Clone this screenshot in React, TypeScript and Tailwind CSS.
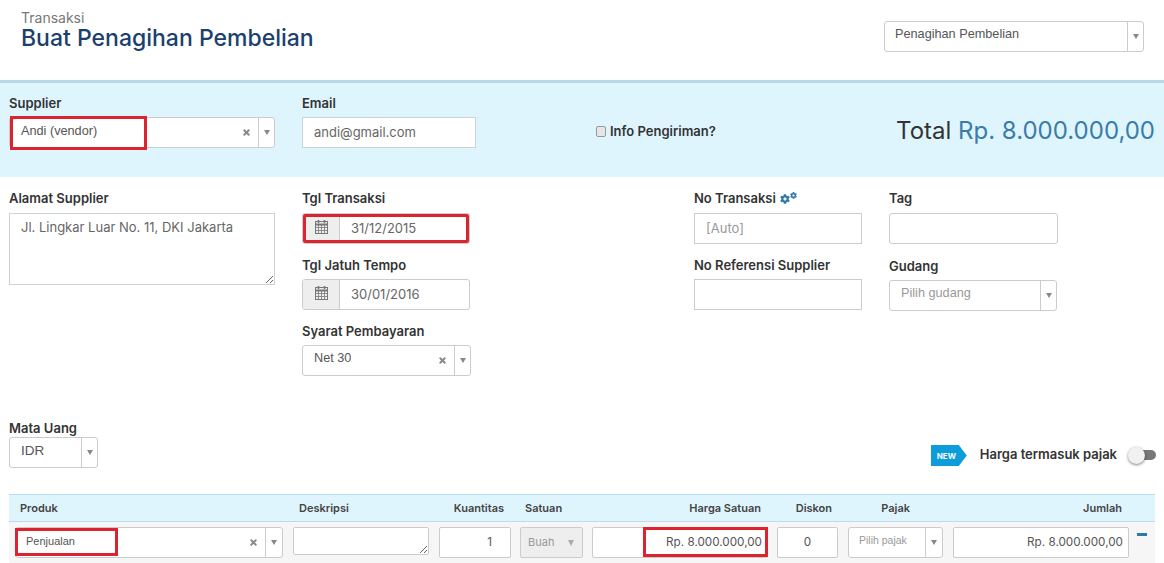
import React from "react"
import { X } from "lucide-react"
import { FaCog } from "react-icons/fa"

const LABEL = "block text-[13px] font-semibold leading-[16px] text-[#333]"
const BOX = "border border-[#ccd3d8] bg-white text-[13px] text-[#666]"

const Caret = ({ className = "" }: { className?: string }) => (
    <span className={`ml-auto flex h-full shrink-0 items-center justify-center border-l border-[#ccc] ${className}`}>
        <span className="h-0 w-0 border-x-[3px] border-t-[5px] border-x-transparent border-t-[#888]" />
    </span>
)

const Clear = () => <X className="mr-[7px] h-[9px] w-[9px] shrink-0 text-[#888]" strokeWidth={5} />

const CalendarIcon = () => (
    <svg viewBox="0 0 13 14" className="-mt-[3px] h-[14px] w-[13px] text-[#777]" fill="none" stroke="currentColor">
        <path d="M3.5 0v3M9.5 0v3" strokeWidth="1.6" />
        <rect x="0.5" y="1.5" width="12" height="12" />
        <path d="M0 4.5h13" strokeWidth="2" />
        <path d="M0.5 7.5h12M0.5 10.5h12M3.5 5v8M6.5 5v8M9.5 5v8" strokeWidth="0.8" />
    </svg>
)

const SelectBox = ({ value, width, clear, muted, caret = "w-[16px]", textClass = "pl-[11px] text-[12.7px] -mt-[4px]" }: {
    value?: string
    width: string
    clear?: boolean
    muted?: boolean
    caret?: string
    textClass?: string
}) => (
    <div className={`flex h-[31px] items-center rounded-[3px] border border-[#ccc] bg-white font-['Liberation_Sans',sans-serif] ${muted ? "text-[#999]" : "text-[#555]"} ${width}`}>
        <span className={`truncate ${textClass}`}>{value}</span>
        {clear && <span className="ml-auto flex"><Clear /></span>}
        <Caret className={clear ? `!ml-0 ${caret}` : caret} />
    </div>
)

const DateBox = ({ value, marked }: { value: string; marked?: boolean }) => (
    <div className="relative flex h-[31px] w-[168px] overflow-hidden rounded-[3px] border border-[#ccc] bg-white text-[13px] text-[#666]">
        <span className="flex w-[37px] shrink-0 items-center justify-center border-r border-[#ccc] bg-[#eee]">
            <CalendarIcon />
        </span>
        <span className="flex items-center pl-[11px]">{value}</span>
        {marked && <span className="absolute inset-0 border-[3px] border-[#dc2430]" />}
    </div>
)

export default function App() {
    return (
        <div className="h-[563px] w-[1164px] overflow-hidden bg-white font-['Inter',sans-serif]">
            {/* Judul */}
            <div className="flex h-[80px] items-start justify-between pl-[21px] pr-[20px]">
                <div className="pt-[10px]">
                    <div className="text-[14px] leading-[16px] text-[#777]">Transaksi</div>
                    <div className="-mt-[1px] text-[23px] font-medium leading-[26px] text-[#1b3f6e]">Buat Penagihan Pembelian</div>
                </div>
                <div className="pt-[21px]">
                    <SelectBox value="Penagihan Pembelian" width="w-[260px]" textClass="pl-[10px] text-[12.7px] -mt-[3px]" />
                </div>
            </div>

            {/* Supplier */}
            <div className="flex h-[97px] border-t-[3px] border-[#b9d8e6] bg-[#dff5fe] pl-[9px] pr-[9px] pt-[12px]">
                <div className="w-[266px]">
                    <label className={LABEL}>Supplier</label>
                    <div className="relative mt-[6px]">
                        <SelectBox value="Andi (vendor)" width="w-[266px]" clear textClass="pl-[11px] text-[12.7px] -mt-[1px]" />
                        <span className="absolute -top-[1px] left-[1px] h-[34px] w-[137px] border-[3px] border-[#dc2430]" />
                    </div>
                </div>
                <div className="ml-[27px] w-[174px]">
                    <label className={LABEL}>Email</label>
                    <div className={`mt-[6px] flex h-[31px] items-center pl-[11px] ${BOX}`}>andi@gmail.com</div>
                </div>
                <label className="ml-[120px] mt-[29px] flex h-[16px] items-center text-[13px] font-semibold text-[#333]">
                    <input type="checkbox" className="-mt-[2px] mr-[4px] h-[11px] w-[10px] appearance-none rounded-[2px] border border-[#999] bg-[#e6e6e6]" />
                    Info Pengiriman?
                </label>
                <div className="ml-auto mt-[21px] text-[24px] leading-[30px] text-[#333]">
                    Total <span className="text-[#3a7ca8]">Rp. 8.000.000,00</span>
                </div>
            </div>

            {/* Detail */}
            <div className="flex h-[243px] pl-[9px] pt-[13px]">
                <div className="w-[266px]">
                    <label className={LABEL}>Alamat Supplier</label>
                    <textarea
                        readOnly
                        value="Jl. Lingkar Luar No. 11, DKI Jakarta"
                        className={`mt-[7px] block h-[72px] w-[266px] px-[11px] py-[4px] ${BOX}`}
                    />
                </div>
                <div className="ml-[27px] w-[171px]">
                    <label className={LABEL}>Tgl Transaksi</label>
                    <div className="mt-[7px]"><DateBox value="31/12/2015" marked /></div>
                    <label className={`${LABEL} mt-[13px]`}>Tgl Jatuh Tempo</label>
                    <div className="mt-[6px]"><DateBox value="30/01/2016" /></div>
                    <label className={`${LABEL} mt-[13px]`}>Syarat Pembayaran</label>
                    <div className="mt-[6px]"><SelectBox value="Net 30" width="w-[169px]" clear /></div>
                </div>
                <div className="ml-[221px] w-[168px]">
                    <label className={`${LABEL} flex items-center`}>
                        No Transaksi
                        <FaCog className="ml-[4px] mt-[2px] h-[10px] w-[10px] text-[#2f78a8]" />
                        <FaCog className="-mt-[5px] h-[7px] w-[7px] text-[#2f78a8]" />
                    </label>
                    <div className="mt-[7px] flex h-[31px] items-center border border-[#ccc] pl-[11px] text-[13px] text-[#999]">[Auto]</div>
                    <label className={`${LABEL} mt-[13px]`}>No Referensi Supplier</label>
                    <div className="mt-[6px] h-[31px] border border-[#ccc]" />
                </div>
                <div className="ml-[27px] w-[169px]">
                    <label className={LABEL}>Tag</label>
                    <div className="mt-[7px] h-[31px] rounded-[3px] border border-[#ccc]" />
                    <label className={`${LABEL} mt-[14px]`}>Gudang</label>
                    <div className="mt-[6px]"><SelectBox value="Pilih gudang" width="w-[168px]" muted textClass="pl-[11px] text-[12.7px] -mt-[3px]" /></div>
                </div>
            </div>

            {/* Mata uang */}
            <div className="flex h-[74px] items-start pl-[9px] pr-[8px]">
                <div>
                    <label className={LABEL}>Mata Uang</label>
                    <div className="mt-[1px]"><SelectBox value="IDR" width="w-[89px]" textClass="pl-[11px] text-[13.5px] -mt-[3px]" /></div>
                </div>
                <div className="ml-auto mt-[23px] flex items-center">
                    <span className="mt-[2px] flex h-[21px] w-[36px] items-center bg-[#0d9ddb] pl-[6px] text-[8px] font-bold text-white [clip-path:polygon(0_0,78%_0,100%_50%,78%_100%,0_100%)]">NEW</span>
                    <span className="ml-[13px] text-[13px] font-semibold text-[#333]">Harga termasuk pajak</span>
                    <span className="relative ml-[12px] block h-[10px] w-[27px] rounded-full bg-[#777]">
                        <span className="absolute -left-[1px] -top-[3px] h-[17px] w-[17px] rounded-full bg-[#f1f1f1] shadow-[0_1px_3px_rgba(0,0,0,0.5)]" />
                    </span>
                </div>
            </div>

            {/* Tabel produk */}
            <div className="mx-[9px] w-[1146px]">
                <div className="flex h-[28px] items-center border-y border-[#bcdcea] bg-[#dff5fe] text-[11px] font-semibold text-[#444]">
                    <span className="ml-[11px] w-[279px]">Produk</span>
                    <span className="w-[138px]">Deskripsi</span>
                    <span className="w-[67px] text-right">Kuantitas</span>
                    <span className="ml-[21px] w-[60px]">Satuan</span>
                    <span className="w-[176px] text-right">Harga Satuan</span>
                    <span className="w-[71px] text-right">Diskon</span>
                    <span className="w-[78px] text-right">Pajak</span>
                    <span className="w-[212px] text-right">Jumlah</span>
                </div>
                <div className="flex h-[41px] items-start bg-[#f6f6f6] pl-[6px] pt-[5px]">
                    <div className="relative">
                        <SelectBox value="Penjualan" width="w-[268px]" clear caret="w-[17px]" textClass="pl-[10px] text-[11px] -mt-[2px]" />
                        <span className="absolute left-0 top-[1px] h-[28px] w-[103px] border-[3px] border-[#dc2430]" />
                    </div>
                    <textarea readOnly className="ml-[10px] block h-[28px] w-[136px] rounded-[2px] border border-[#ccc] bg-white" />
                    <div className="ml-[10px] flex h-[31px] w-[72px] items-center justify-end rounded-[2px] border border-[#ccc] bg-white pr-[18px] text-[11.7px] text-[#555]">1</div>
                    <div className="ml-[9px] flex h-[31px] w-[63px] items-center rounded-[2px] border border-[#ccc] bg-[#eee] pl-[7px] text-[11px] text-[#999]">
                        Buah
                        <span className="ml-[14px] h-0 w-0 border-x-[3px] border-t-[6px] border-x-transparent border-t-[#aaa]" />
                    </div>
                    <div className="relative ml-[9px] flex h-[31px] w-[176px] items-center justify-end rounded-[2px] border border-[#ccc] bg-white pr-[5px] text-[11.7px] text-[#555]">
                        Rp. 8.000.000,00
                        <span className="absolute -right-[1px] -top-[1px] h-[30px] w-[125px] border-[3px] border-[#dc2430]" />
                    </div>
                    <div className="ml-[9px] flex h-[31px] w-[61px] items-center justify-center rounded-[2px] border border-[#ccc] bg-white text-[11.7px] text-[#555]">0</div>
                    <div className="ml-[10px] flex h-[31px] w-[95px] items-center rounded-[3px] border border-[#ccc] bg-white font-['Liberation_Sans',sans-serif] text-[10.5px] text-[#999]">
                        <span className="-mt-[3px] pl-[10px]">Pilih pajak</span>
                        <Caret className="w-[17px]" />
                    </div>
                    <div className="ml-[10px] flex h-[31px] w-[176px] items-center justify-end rounded-[2px] border border-[#ccc] bg-white pr-[5px] text-[11.7px] text-[#555]">Rp. 8.000.000,00</div>
                    <span className="ml-[8px] mt-[6px] block h-[3px] w-[10px] bg-[#2f78a8]" />
                </div>
            </div>
        </div>
    )
}
